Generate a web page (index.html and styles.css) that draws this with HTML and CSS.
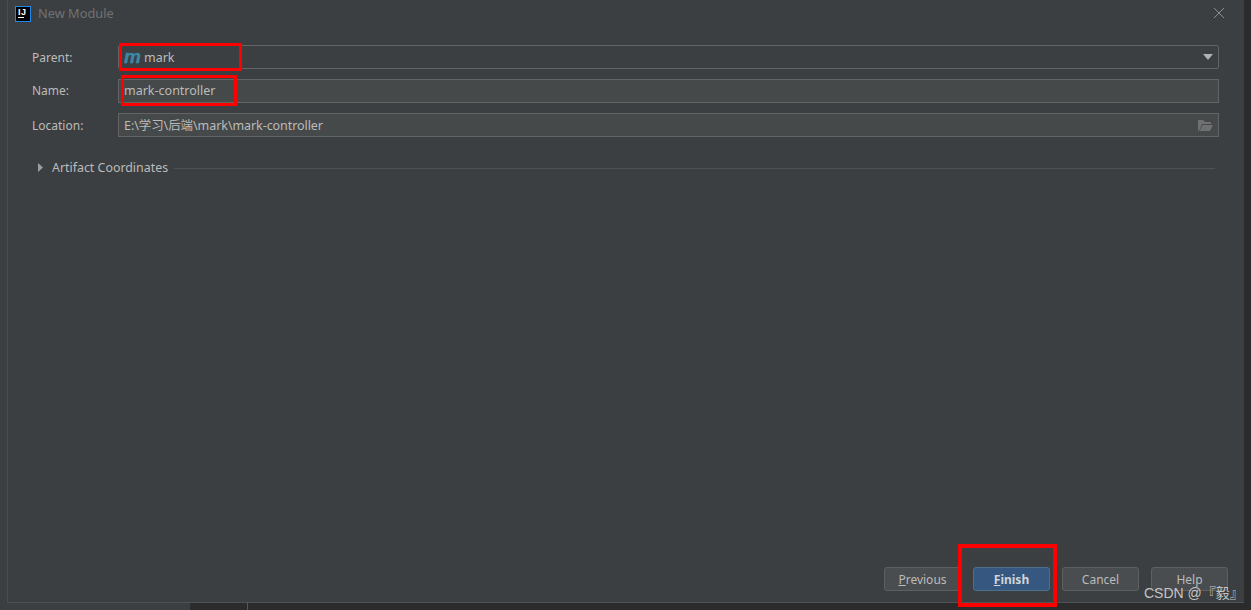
FILE: index.html
```html
<!DOCTYPE html>
<html lang="zh">
<head>
  <meta charset="UTF-8" />
  <title>New Module</title>
  <link rel="stylesheet" href="styles.css">
</head>
<body>
  <div class="screen">
    <div class="dialog">
      <div class="titlebar">
        <div class="app-icon"><span class="app-letters">IJ</span><span class="app-bar"></span></div>
        <span class="title">New Module</span>
        <svg class="close" width="12" height="12" viewBox="0 0 12 12"><path d="M1 1l10 10M11 1L1 11" stroke="#8c8e90" stroke-width="1" fill="none"/></svg>
      </div>

      <div class="form">
        <label class="label">Parent:</label>
        <div class="field select">
          <span class="maven-m">m</span>
          <span>mark</span>
          <svg class="caret" width="10" height="6" viewBox="0 0 10 6"><path d="M0 0h10L5 6z" fill="#afb1b3"/></svg>
        </div>

        <label class="label label-up">Name:</label>
        <div class="field input">mark-controller</div>

        <label class="label">Location:</label>
        <div class="field input">
          <span class="path">E:\学习\后端\mark\mark-controller</span>
          <svg class="folder" width="15" height="11" viewBox="0 0 15 11"><path d="M0 0h5l2 2h6v2H4L1.500 10 0 11z" fill="#6e7072"/><path d="M4.500 5H15l-3 6H1.500z" fill="#6e7072"/></svg>
        </div>
      </div>

      <div class="section">
        <svg class="arrow" width="5" height="9" viewBox="0 0 5 9"><path d="M0 0l5 4.500L0 9z" fill="#9a9c9e"/></svg>
        <span class="section-name">Artifact Coordinates</span>
        <span class="section-line"></span>
      </div>

      <div class="buttons">
        <button class="btn"><u>P</u>revious</button>
        <button class="btn primary"><u>F</u>inish</button>
        <button class="btn">Cancel</button>
        <button class="btn">Help</button>
      </div>
    </div>
    <div class="taskbar"><span class="taskbar-line"></span></div>

    <!-- red marks on top of the screenshot -->
    <div class="mark mark-parent"></div>
    <div class="mark mark-name"></div>
    <div class="mark mark-finish"></div>
    <div class="watermark">CSDN @『毅』</div>
  </div>
</body>
</html>
```

FILE: styles.css
```css
* {
  box-sizing: border-box;
}
html, body {
  margin: 0;
  height: 100%;
  overflow: hidden;
}
body {
  font-family: "Noto Sans", "Noto Sans CJK SC", sans-serif;
  font-size: 12px;
  color: #bbbbbb;
  background: #2b2b2b;
}
.screen {
  position: relative;
  width: 1251px;
  height: 610px;
  padding-left: 7px;
  background: linear-gradient(to right, #3c3f41 190px, #2b2b2b 190px);
}
.dialog {
  display: flex;
  flex-direction: column;
  width: 1237px;
  height: 603px;
  background: #3c3f41;
  border-left: 1px solid #4a4d4f;
  border-bottom: 1px solid #4f5254;
}
.titlebar {
  display: flex;
  align-items: center;
  height: 27px;
  padding-left: 7px;
  padding-right: 19px;
}
.app-icon {
  position: relative;
  width: 16px;
  height: 16px;
  background: #000;
  border: 1px solid #1f87f0;
}
.app-letters {
  position: absolute;
  left: 2px;
  top: 1px;
  font-family: "Liberation Sans", sans-serif;
  font-size: 9px;
  line-height: 9px;
  letter-spacing: 0.500px;
  font-weight: bold;
  color: #fff;
}
.app-bar {
  position: absolute;
  left: 2px;
  bottom: 3px;
  width: 6px;
  height: 1px;
  background: #fff;
}
.title {
  margin-left: 7px;
  padding-bottom: 2px;
  color: #6f7274;
  font-size: 12.800px;
}
.close {
  margin-left: auto;
  margin-bottom: 1px;
}
.form {
  display: grid;
  grid-template-columns: 86px 1101px;
  row-gap: 10px;
  margin-top: 18px;
  padding-left: 24px;
  align-items: center;
}
.label {
  color: #bbbbbb;
}
.label-up {
  padding-bottom: 2px;
}
.field {
  display: flex;
  align-items: center;
  height: 24px;
  padding: 0 5px;
  border: 1px solid #646464;
  font-size: 12.500px;
}
.select {
  background: #3c3f41;
  border-radius: 2px;
}
.input {
  padding-bottom: 2px;
  background: #45494a;
}
.path {
  letter-spacing: -0.070px;
}
.maven-m {
  width: 20px;
  font-family: "Liberation Sans", sans-serif;
  font-size: 19px;
  line-height: 20px;
  font-weight: bold;
  font-style: italic;
  color: #3a87a8;
  -webkit-text-stroke: 0.400px #3a87a8;
}
.caret {
  margin-left: auto;
}
.folder {
  margin-left: auto;
  margin-top: 2px;
}
.section {
  display: flex;
  align-items: center;
  margin-top: 20px;
  padding-left: 30px;
  height: 20px;
}
.section-name {
  margin-left: 9px;
  font-size: 12.400px;
}
.section-line {
  width: 1041px;
  height: 1px;
  margin-left: 6px;
  margin-top: 2px;
  background: #515151;
}
.buttons {
  display: flex;
  gap: 12px;
  margin-top: auto;
  margin-bottom: 11px;
  padding-left: 876px;
}
.btn {
  width: 77px;
  height: 24px;
  padding: 0;
  font: inherit;
  color: #bbbbbb;
  background: #4a4d4f;
  border: 1px solid #5e6060;
  border-radius: 3px;
}
.primary {
  font-weight: bold;
  color: #d0d4d8;
  background: #365880;
  border-color: #4c708c;
}
.taskbar {
  position: relative;
  height: 7px;
}
.taskbar-line {
  position: absolute;
  left: 240px;
  top: 0;
  width: 1px;
  height: 7px;
  background: #55585a;
}
.mark {
  position: absolute;
  border: 3px solid #ff0000;
}
.mark-parent {
  left: 119px;
  top: 43px;
  width: 123px;
  height: 28px;
}
.mark-name {
  left: 121px;
  top: 75px;
  width: 116px;
  height: 31px;
}
.mark-finish {
  left: 958px;
  top: 544px;
  width: 99px;
  height: 63px;
  border-width: 4px;
}
.watermark {
  position: absolute;
  left: 1144px;
  top: 584px;
  font-family: "Liberation Sans", "Noto Sans CJK SC", sans-serif;
  font-size: 14px;
  line-height: 18px;
  white-space: nowrap;
  color: rgba(215, 215, 215, 0.9);
}
```
